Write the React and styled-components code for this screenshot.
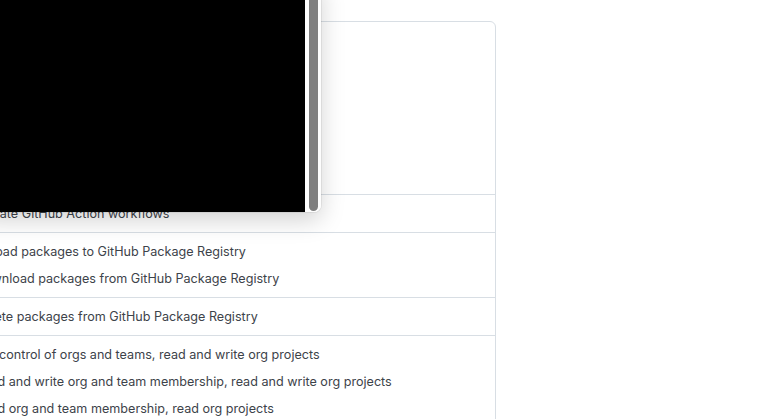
import styled, { createGlobalStyle } from "styled-components";

const GlobalStyle = createGlobalStyle`
  html, body {
    margin: 0;
    padding: 0;
    background: #ffffff;
    overflow: hidden;
  }
  body {
    font-family: Inter, "Liberation Sans", Arial, sans-serif;
    font-size: 12.6px;
    color: #3d434a;
  }
`;

const Page = styled.div`
  position: relative;
  width: 772px;
  height: 419px;
  overflow: hidden;
  padding-top: 21px;
  box-sizing: border-box;
`;

// scope list card, its left side runs off the page
const Card = styled.div`
  width: 700px;
  margin-left: -206px;
  border: 1px solid #d8dee4;
  border-radius: 6px;
  background: #fff;
`;

const Group = styled.div`
  padding: 5px 0;

  & + & {
    border-top: 1px solid #d8dee4;
  }
`;

const Row = styled.div`
  display: grid;
  grid-template-columns: 164px 1fr;
  align-items: center;
  height: 27px;
  padding: 0 16px;
`;

const Scope = styled.label`
  display: flex;
  align-items: center;
  gap: 8px;
  padding-left: ${(p) => (p.$child ? "20px" : "0")};
  font-weight: ${(p) => (p.$child ? 400 : 600)};
  color: #1f2328;
  white-space: nowrap;

  input {
    margin: 0;
    width: 13px;
    height: 13px;
  }
`;

const Desc = styled.span`
  white-space: nowrap;
  line-height: 27px;
`;

// floating preview window over the list
const Popover = styled.div`
  position: absolute;
  top: -20px;
  left: -20px;
  width: 341px;
  height: 232px;
  display: flex;
  background: #ffffff;
  border-radius: 0 0 7px 0;
  box-shadow: 0 0 0 1px rgba(0, 0, 0, 0.06), 0 8px 24px rgba(0, 0, 0, 0.18);
  overflow: hidden;
`;

const Screen = styled.div`
  flex: 1;
  background: #000;
`;

const Track = styled.div`
  width: 16px;
  display: flex;
  padding: 0 3px 1px 4px;
  box-sizing: border-box;
  background: #fdfdfd;
`;

const Thumb = styled.div`
  flex: 1;
  background: #7f7f7f;
  border-radius: 0 0 5px 5px;
`;

const groups = [
  [
    ["repo", "Full control of private repositories"],
    ["repo:status", "Access commit status", true],
    ["repo_deployment", "Access deployment status", true],
    ["public_repo", "Access public repositories", true],
    ["repo:invite", "Access repository invitations", true],
    ["security_events", "Read and write security events", true],
  ],
  [["workflow", "Update GitHub Action workflows"]],
  [
    ["write:packages", "Upload packages to GitHub Package Registry"],
    ["read:packages", "Download packages from GitHub Package Registry", true],
  ],
  [["delete:packages", "Delete packages from GitHub Package Registry"]],
  [
    ["admin:org", "Full control of orgs and teams, read and write org projects"],
    ["write:org", "Read and write org and team membership, read and write org projects", true],
    ["read:org", "Read org and team membership, read org projects", true],
  ],
];

export default function App() {
  return (
    <>
      <GlobalStyle />
      <Page>
        <Card>
          {groups.map((items, i) => (
            <Group key={i}>
              {items.map(([name, text, child]) => (
                <Row key={name}>
                  <Scope $child={child}>
                    <input type="checkbox" />
                    {name}
                  </Scope>
                  <Desc>{text}</Desc>
                </Row>
              ))}
            </Group>
          ))}
        </Card>
        <Popover>
          <Screen />
          <Track>
            <Thumb />
          </Track>
        </Popover>
      </Page>
    </>
  );
}
